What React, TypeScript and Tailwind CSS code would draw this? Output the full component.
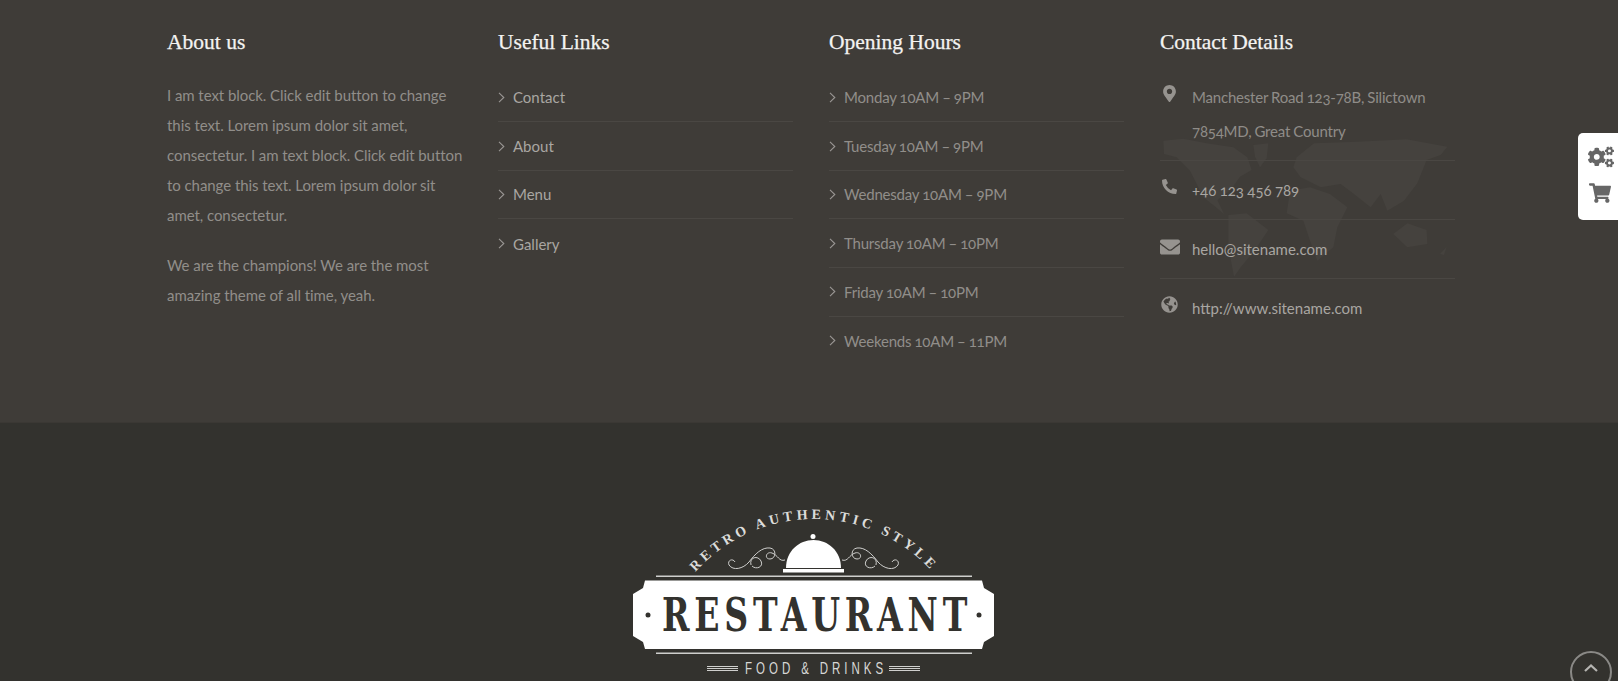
import React from "react";
import { FaCogs, FaShoppingCart, FaMapMarkerAlt, FaPhoneAlt, FaEnvelope, FaGlobeAmericas } from "react-icons/fa";

const heading = "font-['Liberation_Serif',serif] text-[21.5px] leading-8 text-[#f4f3f1] h-8 mb-[15px] [-webkit-text-stroke:0.25px_#f4f3f1] [word-spacing:0px]";

function Chevron() {
  return (
    <svg width="7" height="11" viewBox="0 0 7 11" fill="none" className="shrink-0 mr-2">
      <path d="M1 .8 5.8 5.5 1 10.2" stroke="#9a9794" strokeWidth="1.1" />
    </svg>
  );
}

function LinkList({ items, color }: { items: string[]; color: string }) {
  return (
    <ul className="pt-[0.7px]">
      {items.map((t, i) => (
        <li key={t} className={`flex items-center h-[48.6px] ${i < items.length - 1 ? "border-b border-[#4a4743]" : ""}`}>
          <Chevron />
          <span className={color}>{t}</span>
        </li>
      ))}
    </ul>
  );
}

function WorldMap() {
  return (
    <svg viewBox="0 0 1020 810" className="absolute left-[-20px] top-[34px] w-[340px] h-[270px]" fill="#45423e">
      <path d="M70 242 130 236 200 250 280 262 322 292 335 330 300 350 270 392 232 420 252 462 228 442 190 412 150 332 110 292 72 282Z" />
      <path d="M340 255 385 250 380 295 360 322 345 290Z" />
      <path d="M265 465 320 460 385 510 345 570 302 622 282 650 265 560Z" />
      <path d="M470 292 522 250 650 245 800 238 922 260 902 285 860 300 832 370 792 422 742 452 722 402 692 442 642 402 602 372 542 382 482 352 460 322Z" />
      <path d="M450 392 510 382 570 402 622 442 592 502 580 562 532 602 510 542 490 482 440 460Z" />
      <path d="M760 522 802 490 860 510 862 552 802 562Z" />
      <path d="M900 582 920 560 912 585Z" />
    </svg>
  );
}

function Contact({ icon, children, last, first }: { icon: React.ReactNode; children: React.ReactNode; last?: boolean; first?: boolean }) {
  return (
    <li className={`relative flex pt-[11.5px] pb-[12.5px] ${last ? "" : "border-b border-[#4a4743]"}`}>
      <span className="w-[32px] shrink-0 pt-[5px] text-[#96938f] flex">{icon}</span>
      <div className={`leading-[34px] ${first ? "text-[#8f8c88] tracking-[-0.2px]" : "text-[#a9a6a2]"}`}>{children}</div>
    </li>
  );
}

function Logo() {
  const slab = "'DejaVu Serif','Liberation Serif',serif";
  return (
    <svg width="390" height="181" viewBox="620 500 390 181" className="block">
      <defs>
        <path id="arc" d="M655 679A159 159 0 0 1 973 679" />
      </defs>
      <text fontFamily="'Liberation Sans Narrow','Liberation Serif',serif" fontWeight="700" fontSize="14" fill="#dcdcda" letterSpacing="3.9">
        <textPath href="#arc" startOffset="50%" textAnchor="middle">RETRO AUTHENTIC STYLE</textPath>
      </text>
      <circle cx="813" cy="537.5" r="2.5" fill="#fff" />
      <path d="M786 569C786 552 799 541 813.500 541S841 552 841 569Z" fill="#fff" />
      <rect x="783" y="570" width="61" height="3.500" fill="#fff" />
      <g fill="none" stroke="#cfcfcd" strokeWidth="1">
        <path d="M729 566C733 572 743 570 749 563 755 555 762 548 770 549 777 550 776 560 770 560 764 560 766 552 772 554 778 556 779 563 785 561" />
        <path d="M729 566C727 561 733 559 735 563" />
        <path d="M751 566C749 558 758 556 761 562 764 568 756 571 752 567" />
        <path d="M898 566C894 572 884 570 878 563 872 555 865 548 857 549 850 550 851 560 857 560 863 560 861 552 855 554 849 556 848 563 842 561" />
        <path d="M898 566C900 561 894 559 892 563" />
        <path d="M876 566C878 558 869 556 866 562 863 568 871 571 875 567" />
      </g>
      <rect x="656" y="576.500" width="316" height="1.500" fill="#cfcfcd" />
      <rect x="656" y="653.500" width="316" height="1.500" fill="#cfcfcd" />
      <path d="M645 581.500H982L984 589 994 595V637L984 643 982 650H645L643 643 633 637V595L643 589Z" fill="#fff" />
      <circle cx="648" cy="616" r="2.500" fill="#33322e" />
      <circle cx="979" cy="616" r="2.500" fill="#33322e" />
      <text transform="translate(662 632) scale(0.72 1)" fontFamily={slab} fontWeight="700" fontSize="46" fill="#33322e" textLength="424" lengthAdjust="spacing">RESTAURANT</text>
      <text transform="translate(745 675) scale(0.72 1)" fontFamily="'Liberation Sans',sans-serif" fontSize="16" fill="#d8d8d6" textLength="192" lengthAdjust="spacing">FOOD &amp; DRINKS</text>
      <g fill="#cfcfcd">
        <rect x="707" y="667" width="31" height="1" />
        <rect x="707" y="669" width="31" height="1" />
        <rect x="707" y="671" width="31" height="1" />
        <rect x="889" y="667" width="31" height="1" />
        <rect x="889" y="669" width="31" height="1" />
        <rect x="889" y="671" width="31" height="1" />
      </g>
    </svg>
  );
}

export default function App() {
  return (
    <div className="relative h-[681px] overflow-hidden bg-[#33322e] font-['Lato',sans-serif] text-[15px] [font-variant-numeric:oldstyle-nums] [word-spacing:-0.5px]">
      <footer className="h-[423px] bg-[#3f3c38] border-b border-[#3b3834]">
        <div className="ml-[167px] w-[1288px] grid grid-cols-4 gap-x-[36px] pt-[26px]">
          <section>
            <h3 className={heading}>About us</h3>
            <p className="mt-[22px] mr-[-6px] leading-[30px] text-[#918e8a] tracking-[-0.06px] [word-spacing:0px]">I am text block. Click edit button to change this text. Lorem ipsum dolor sit amet, consectetur. I am text block. Click edit button to change this text. Lorem ipsum dolor sit amet, consectetur.</p>
            <p className="mt-5 leading-[30px] text-[#918e8a] tracking-[-0.06px] [word-spacing:0px]">We are the champions! We are the most amazing theme of all time, yeah.</p>
          </section>
          <section>
            <h3 className={heading}>Useful Links</h3>
            <LinkList items={["Contact", "About", "Menu", "Gallery"]} color="text-[#a9a6a2]" />
          </section>
          <section>
            <h3 className={heading}>Opening Hours</h3>
            <LinkList
              color="text-[#918e8a] tracking-[-0.2px]"
              items={["Monday 10AM – 9PM", "Tuesday 10AM – 9PM", "Wednesday 10AM – 9PM", "Thursday 10AM – 10PM", "Friday 10AM – 10PM", "Weekends 10AM – 11PM"]}
            />
          </section>
          <section className="relative">
            <WorldMap />
            <h3 className={`${heading} relative`}>Contact Details</h3>
            <ul className="relative mt-[-5px]">
              <Contact first icon={<FaMapMarkerAlt size={17} className="ml-[1px]" />}>Manchester Road 123-78B, Silictown<br />7854MD, Great Country</Contact>
              <Contact icon={<FaPhoneAlt size={15} className="mt-[1px] ml-[2px]" />}>+46 123 456 789</Contact>
              <Contact icon={<FaEnvelope size={20} />}>hello@sitename.com</Contact>
              <Contact last icon={<FaGlobeAmericas size={17} className="ml-[1px]" />}>http://www.sitename.com</Contact>
            </ul>
          </section>
        </div>
      </footer>
      <div className="flex justify-start pl-[620px] pt-[76px]">
        <Logo />
      </div>
      <div className="absolute right-0 top-[133px] w-10 h-[87px] bg-white rounded-l-[5px] flex flex-col items-center pt-[11px] text-[#666]">
        <FaCogs size={26} className="ml-[5px]" />
        <FaShoppingCart size={22} className="ml-[4px] mt-[12px]" />
      </div>
      <div className="absolute left-[1570px] top-[651px] w-[42px] h-[42px] rounded-full border-2 border-[#8a8986] flex justify-center pt-[10px]">
        <svg width="16" height="10" viewBox="0 0 16 10" fill="none"><path d="M2 8 8 2.500 14 8" stroke="#b5b4b1" strokeWidth="2.200" /></svg>
      </div>
    </div>
  );
}
